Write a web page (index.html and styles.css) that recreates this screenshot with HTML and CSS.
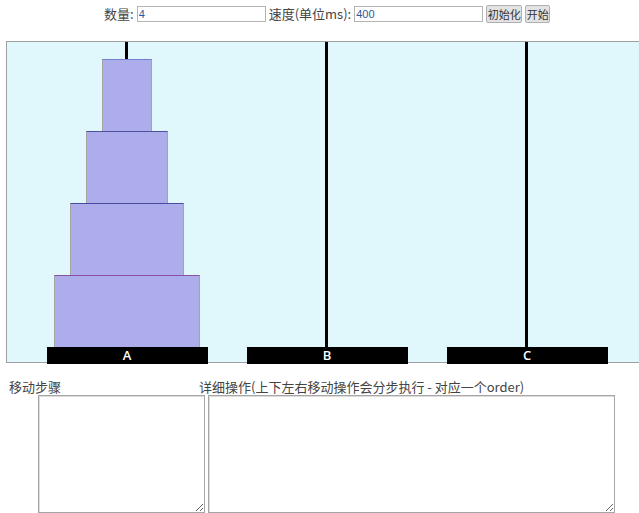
FILE: index.html
```html
<!DOCTYPE html>
<html>
<head>
<meta charset="utf-8">
<link rel="stylesheet" href="styles.css">
</head>
<body>
<div class="toolbar">
  <span class="lbl">数量:</span>
  <input class="field" type="text" value="4">
  <span class="lbl">速度(单位ms):</span>
  <input class="field" type="text" value="400">
  <button class="btn btn-init">初始化</button>
  <button class="btn btn-start">开始</button>
</div>
<div class="stage">
  <div class="tower">
    <div class="peg"></div>
    <div class="disk d1"></div>
    <div class="disk d2"></div>
    <div class="disk d3"></div>
    <div class="disk d4"></div>
    <div class="base">A</div>
  </div>
  <div class="tower">
    <div class="peg"></div>
    <div class="base">B</div>
  </div>
  <div class="tower">
    <div class="peg"></div>
    <div class="base">C</div>
  </div>
</div>
<div class="labels">
  <span class="lbl steps-lbl">移动步骤</span>
  <span class="lbl detail-lbl">详细操作(上下左右移动操作会分步执行 - 对应一个order)</span>
</div>
<div class="areas">
  <textarea class="ta ta-steps"></textarea>
  <textarea class="ta ta-detail"></textarea>
</div>
</body>
</html>
```
FILE: styles.css
```css
html, body {
  margin: 0;
  padding: 0;
  overflow: hidden;
  background: #fff;
}
body {
  font-family: "Noto Sans CJK SC", "Noto Sans", sans-serif;
  font-size: 13px;
  color: #444;
}
.toolbar {
  display: flex;
  align-items: center;
  height: 28px;
  padding-left: 104px;
  box-sizing: border-box;
}
.lbl {
  line-height: 16px;
  white-space: nowrap;
}
.field {
  box-sizing: border-box;
  width: 129px;
  height: 16px;
  margin: 0 3px 0 3px;
  padding: 0 1px;
  border: 1px solid #b4b4b4;
  font-family: "Liberation Sans", sans-serif;
  font-size: 11px;
  color: #2b5a9c;
  outline: none;
}
.btn {
  box-sizing: border-box;
  height: 18px;
  padding: 0;
  margin: 0;
  border: 1px solid #b0b0b0;
  border-radius: 2px;
  background: #e3e3e3;
  font-family: "Noto Sans CJK SC", sans-serif;
  font-size: 11px;
  line-height: 14px;
  color: #333;
  white-space: nowrap;
  text-align: center;
}
.btn-init {
  width: 36px;
}
.btn-start {
  width: 25px;
  margin-left: 3px;
}
.stage {
  margin: 13px 0 0 6px;
  width: 640px;
  height: 320px;
  border: 1px solid #a0a0a0;
  border-right: none;
  background: #e0f7fb;
  display: flex;
  padding-left: 20px;
  box-sizing: content-box;
}
.tower {
  position: relative;
  width: 200px;
  height: 320px;
  display: flex;
  flex-direction: column;
  justify-content: flex-end;
  align-items: center;
}
.peg {
  position: absolute;
  top: 0;
  bottom: 10px;
  left: 98px;
  width: 3px;
  background: #000;
}
.disk {
  position: relative;
  box-sizing: border-box;
  height: 72px;
  background: #adadeb;
  border: 1px solid #a4a4a4;
  border-bottom: none;
}
.d1 { width: 50px; border-top-color: #6f80d0; }
.d2 { width: 82px; border-top-color: #4f4f9f; }
.d3 { width: 114px; border-top-color: #4a4aa0; }
.d4 { width: 146px; border-top-color: #8a50a8; }
.base {
  position: relative;
  width: 161px;
  height: 17px;
  margin-bottom: -2px;
  background: #000;
  color: #fff;
  font-family: "Open Sans", sans-serif;
  font-weight: 600;
  font-size: 13px;
  line-height: 17px;
  text-align: center;
}
.labels {
  display: flex;
  margin-top: 16px;
  padding-left: 9px;
  height: 16px;
}
.steps-lbl {
  width: 190px;
}
.areas {
  display: flex;
  padding-left: 38px;
}
.ta {
  box-sizing: border-box;
  height: 118px;
  margin: 0;
  border: 1px solid #a6a6a6;
  box-shadow: inset 1px 1px 0 #dcdcdc;
  background: #fff;
  padding: 1px;
}
.ta-steps {
  width: 167px;
}
.ta-detail {
  width: 407px;
  margin-left: 3px;
}
```
